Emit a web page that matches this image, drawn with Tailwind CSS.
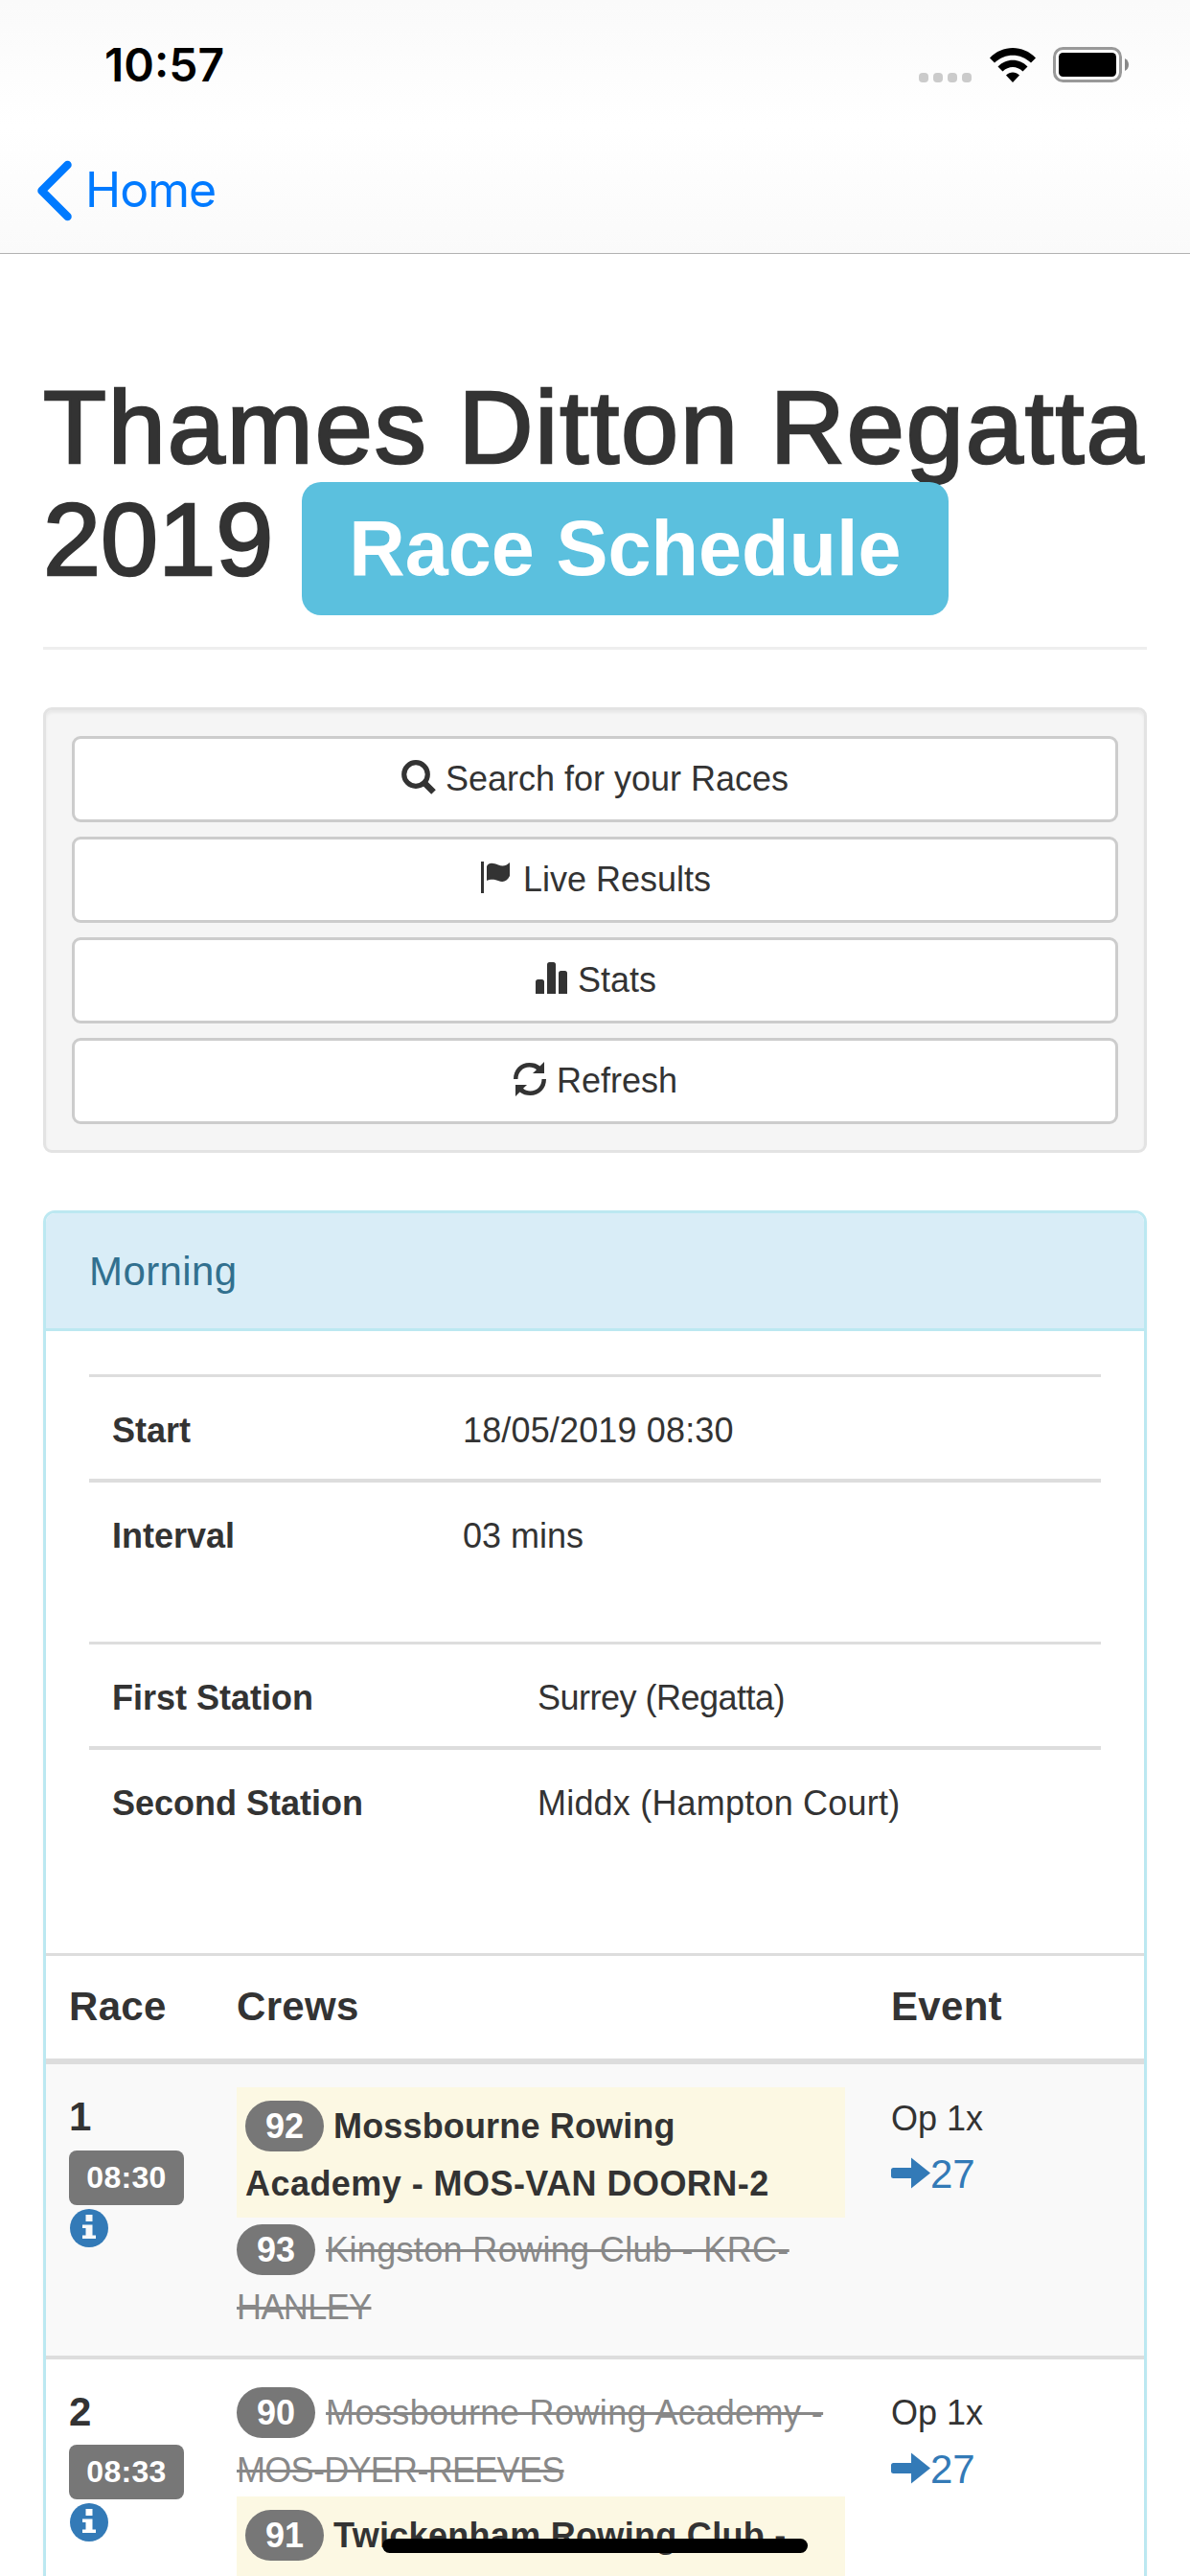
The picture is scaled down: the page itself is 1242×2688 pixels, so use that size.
<!DOCTYPE html>
<html lang="en">
<head>
  <meta charset="UTF-8" />
  <title>Thames Ditton Regatta 2019 - Race Schedule</title>
  <script src="https://cdn.jsdelivr.net/npm/@tailwindcss/browser@4"></script>
</head>
<body class="bg-white text-[#333] w-[1242px] h-[2688px] overflow-hidden relative font-['Liberation_Sans',Arial,sans-serif] text-[36px]">

  <!-- Status bar + navigation -->
  <header class="h-[265px] border-b border-[#b2b2b2] bg-linear-to-b from-[#fafafa] via-white to-[#fafafa] font-['Inter',sans-serif]">
    <div class="flex items-center justify-between h-[135px] pl-[109px] pr-[63px]">
      <span class="text-[48px] font-semibold text-black">10:57</span>
      <div class="flex items-end h-[37px]">
        <div class="flex gap-[5px] mr-[19px]">
          <i class="size-[10px] rounded-[4px] bg-[#cbcbcb]"></i>
          <i class="size-[10px] rounded-[4px] bg-[#cbcbcb]"></i>
          <i class="size-[10px] rounded-[4px] bg-[#cbcbcb]"></i>
          <i class="size-[10px] rounded-[4px] bg-[#cbcbcb]"></i>
        </div>
        <svg class="w-[48px] h-[36px] mr-[18px]" viewBox="0 0 48 36" fill="#000">
          <path d="M0 10.500C13-3.500 35-3.500 48 10.500L43 15.500C32 5 16 5 5 15.500Z" />
          <path d="M8.500 19.500C17 10.500 31 10.500 39.500 19.500L34.500 24.500C28.500 18.500 19.500 18.500 13.500 24.500Z" />
          <path d="M17 28.500C21 24.500 27 24.500 31 28.500L24 36Z" />
        </svg>
        <svg class="w-[80px] h-[37px]" viewBox="0 0 80 37">
          <rect x="1.500" y="1.500" width="69" height="34" rx="9" fill="#fff" stroke="#999" stroke-width="3" />
          <rect x="6" y="6" width="60" height="25" rx="4.500" fill="#000" />
          <path d="M75 12C78 13.500 79 16 79 18.500C79 21 78 23.500 75 25Z" fill="#888" />
        </svg>
      </div>
    </div>
    <a href="#" class="flex items-center h-[127px] pl-[38px] text-[#007aff]">
      <svg class="w-[40px] h-[66px]" viewBox="0 0 40 66" fill="none" stroke="#007aff" stroke-width="8.500" stroke-linecap="round" stroke-linejoin="round">
        <path d="M32.500 6L5.500 33L32.500 60" />
      </svg>
      <span class="text-[50px] ml-[11px] tracking-[-1px]">Home</span>
    </a>
  </header>

  <main class="px-[45px]">
    <h1 class="mt-[122px] pb-[54px] border-b-3 border-[#eee] text-[108px] leading-[117px] whitespace-nowrap">
      <span class="tracking-[1.900px] [-webkit-text-stroke:2.500px_#333]">Thames Ditton Regatta</span><br />
      <span class="[-webkit-text-stroke:2.500px_#333]">2019</span>
      <span class="text-[81px] leading-none font-bold text-white bg-[#5bc0de] rounded-[20px] px-[49px] pt-[24px] pb-[25px]">Race Schedule</span>
    </h1>

    <!-- Actions -->
    <div class="mt-[60px] p-[27px] flex flex-col gap-[15px] bg-[#f5f5f5] border-3 border-[#e3e3e3] rounded-[9px] shadow-[inset_0_3px_3px_rgba(0,0,0,0.05)]">
      <button class="h-[90px] flex items-center justify-center gap-[10px] bg-white border-3 border-[#ccc] rounded-[9px]">
        <svg class="size-[36px] -mt-[4px]" viewBox="0 0 36 36" fill="none" stroke="#333">
          <circle cx="15" cy="15" r="12.300" stroke-width="5.200" />
          <path d="M23 23L33.500 33.500" stroke-width="6.500" />
        </svg>
        Search for your Races
      </button>
      <button class="h-[90px] flex items-center justify-center gap-[10px] bg-white border-3 border-[#ccc] rounded-[9px]">
        <svg class="size-[36px] -mt-[4px]" viewBox="0 0 36 36" fill="#333">
          <path d="M2 1H5V34H2Z" />
          <path d="M8 6C10 1.500 15 2.500 20 4.500C24 6 28 6 32 2V16C29 22 25 23 20 21C15 19 11 19.500 8 21Z" />
        </svg>
        Live Results
      </button>
      <button class="h-[90px] flex items-center justify-center gap-[10px] bg-white border-3 border-[#ccc] rounded-[9px]">
        <svg class="size-[36px] -mt-[4px]" viewBox="0 0 36 36" fill="#333">
          <path d="M2 34V21.500Q2 19 4.500 19H8.500Q11 19 11 21.500V34Z" />
          <path d="M14 34V3.500Q14 1 16.500 1H20.500Q23 1 23 3.500V34Z" />
          <path d="M26 34V12.500Q26 10 28.500 10H32.500Q35 10 35 12.500V34Z" />
        </svg>
        Stats
      </button>
      <button class="h-[90px] flex items-center justify-center gap-[10px] bg-white border-3 border-[#ccc] rounded-[9px]">
        <svg class="size-[36px] -mt-[4px]" viewBox="0 0 36 36" fill="#333">
          <path d="M1 18C1 8 8 1 17.500 1C22 1 25.500 2 28.500 4.500L33 0V12H21L25 8.300C23 6.500 20.500 5.500 17.500 5.500C10.500 5.500 5.500 11 5.500 18Z" />
          <path d="M35 18C35 28 28 35 18.500 35C14 35 10.500 34 7.500 31.500L3 36V24H15L11 27.700C13 29.500 15.500 30.500 18.500 30.500C25.500 30.500 30.500 25 30.500 18Z" />
        </svg>
        Refresh
      </button>
    </div>

    <!-- Morning session -->
    <section class="mt-[60px] h-[1500px] border-3 border-[#bce8f1] rounded-[12px] shadow-[0_3px_3px_rgba(0,0,0,0.05)]">
      <h2 class="h-[123px] px-[45px] bg-[#d9edf7] border-b-3 border-[#bce8f1] rounded-t-[9px] text-[#31708f] text-[42px] leading-[121px] tracking-[0.400px]">Morning</h2>

      <div class="mx-[45px] mt-[45px] leading-[51px]">
        <div class="grid grid-cols-[366px_1fr] h-[109px] border-t-3 border-[#ddd] pl-[24px] pt-[30px]">
          <b>Start</b>
          <span class="tracking-[0.150px]">18/05/2019 08:30</span>
        </div>
        <div class="grid grid-cols-[366px_1fr] h-[110px] border-t-4 border-[#ddd] pl-[24px] pt-[30px]">
          <b>Interval</b>
          <span>03 mins</span>
        </div>
      </div>

      <div class="mx-[45px] mt-[60px] leading-[51px]">
        <div class="grid grid-cols-[444px_1fr] h-[109px] border-t-3 border-[#ddd] pl-[24px] pt-[30px]">
          <b>First Station</b>
          <span class="tracking-[-0.500px]">Surrey (Regatta)</span>
        </div>
        <div class="grid grid-cols-[444px_1fr] h-[110px] border-t-4 border-[#ddd] pl-[24px] pt-[30px]">
          <b>Second Station</b>
          <span class="tracking-[0.200px]">Middx (Hampton Court)</span>
        </div>
      </div>

      <!-- Race list -->
      <div class="mt-[106px] leading-[60px]">
        <div class="grid grid-cols-[175px_683px_1fr] h-[116px] pl-[24px] pt-[23px] border-t-3 border-b-6 border-[#ddd] text-[42px] font-bold tracking-[0.300px]">
          <span>Race</span>
          <span>Crews</span>
          <span>Event</span>
        </div>

        <div class="grid grid-cols-[175px_635px_1fr] h-[304px] pl-[24px] pt-[24px] bg-[#f9f9f9]">
          <div>
            <b class="block text-[42px] mt-px">1</b>
            <span class="block w-[120px] h-[57px] mt-[5px] rounded-[8px] bg-[#777] text-white text-center font-bold text-[32px] leading-[56px] tracking-[0.300px]">08:30</span>
            <svg class="size-[40px] mt-[4px] ml-px" viewBox="0 0 40 40">
              <circle cx="20" cy="20" r="20" fill="#337ab7" />
              <path d="M16.500 6H23.500V13H16.500ZM13 16.500H23.500V27.500H27V31H13V27.500H16.500V20H13Z" fill="#f9f9f9" />
            </svg>
          </div>
          <div>
            <div class="bg-[#fcf8e3] pl-[9px] pt-[11px] pb-[5px] font-bold">
              <span class="inline-block px-[21px] rounded-[27px] bg-[#777] text-white leading-[53px]">92</span>
              <span class="tracking-[0.150px]">Mossbourne Rowing</span><br />
              <span class="tracking-[0.450px]">Academy - MOS-VAN DOORN-2</span>
            </div>
            <div class="mt-[4px] text-[#888]">
              <span class="inline-block px-[21px] rounded-[27px] bg-[#777] text-white font-bold leading-[53px]">93</span>
              <s class="ml-px tracking-[0.350px]">Kingston Rowing Club - KRC-</s><br />
              <s class="tracking-[-0.600px]">HANLEY</s>
            </div>
          </div>
          <div class="pl-[48px] pt-px text-[42px]">
            <span class="text-[36px]">Op 1x</span>
            <a href="#" class="flex -mt-[2px] text-[#337ab7]">
              <svg class="w-[41px] h-[33px] mt-[12px]" viewBox="0 0 41 33" fill="#337ab7">
                <path d="M0 13.500Q0 11 2.500 11H21V0.500L41 16.500L21 32.500V22H2.500Q0 22 0 19.500Z" />
              </svg>
              27
            </a>
          </div>
        </div>

        <div class="grid grid-cols-[175px_635px_1fr] h-[308px] pl-[24px] pt-[24px] border-t-4 border-[#ddd]">
          <div>
            <b class="block text-[42px] mt-px">2</b>
            <span class="block w-[120px] h-[57px] mt-[4px] rounded-[8px] bg-[#777] text-white text-center font-bold text-[32px] leading-[56px] tracking-[0.300px]">08:33</span>
            <svg class="size-[40px] mt-[4px] ml-px" viewBox="0 0 40 40">
              <circle cx="20" cy="20" r="20" fill="#337ab7" />
              <path d="M16.500 6H23.500V13H16.500ZM13 16.500H23.500V27.500H27V31H13V27.500H16.500V20H13Z" fill="#fff" />
            </svg>
          </div>
          <div>
            <div class="mt-[2px] -mb-[3px] text-[#888]">
              <span class="inline-block px-[21px] rounded-[27px] bg-[#777] text-white font-bold leading-[53px]">90</span>
              <s class="ml-px tracking-[0.400px]">Mossbourne Rowing Academy -</s><br />
              <s class="tracking-[-0.700px]">MOS-DYER-REEVES</s>
            </div>
            <!-- runs on below the fold -->
            <div class="bg-[#fcf8e3] pl-[9px] pt-[11px] h-[136px] font-bold">
              <span class="inline-block px-[21px] rounded-[27px] bg-[#777] text-white leading-[53px]">91</span>
              <span class="tracking-[0.300px]">Twickenham Rowing Club -</span>
            </div>
          </div>
          <div class="pl-[48px] text-[42px]">
            <span class="text-[36px]">Op 1x</span>
            <a href="#" class="flex -mt-px text-[#337ab7]">
              <svg class="w-[41px] h-[33px] mt-[12px]" viewBox="0 0 41 33" fill="#337ab7">
                <path d="M0 13.500Q0 11 2.500 11H21V0.500L41 16.500L21 32.500V22H2.500Q0 22 0 19.500Z" />
              </svg>
              27
            </a>
          </div>
        </div>
      </div>
    </section>
  </main>

  <!-- Home indicator -->
  <div class="absolute left-[399px] top-[2649px] w-[444px] h-[15px] rounded-full bg-black"></div>
</body>
</html>
